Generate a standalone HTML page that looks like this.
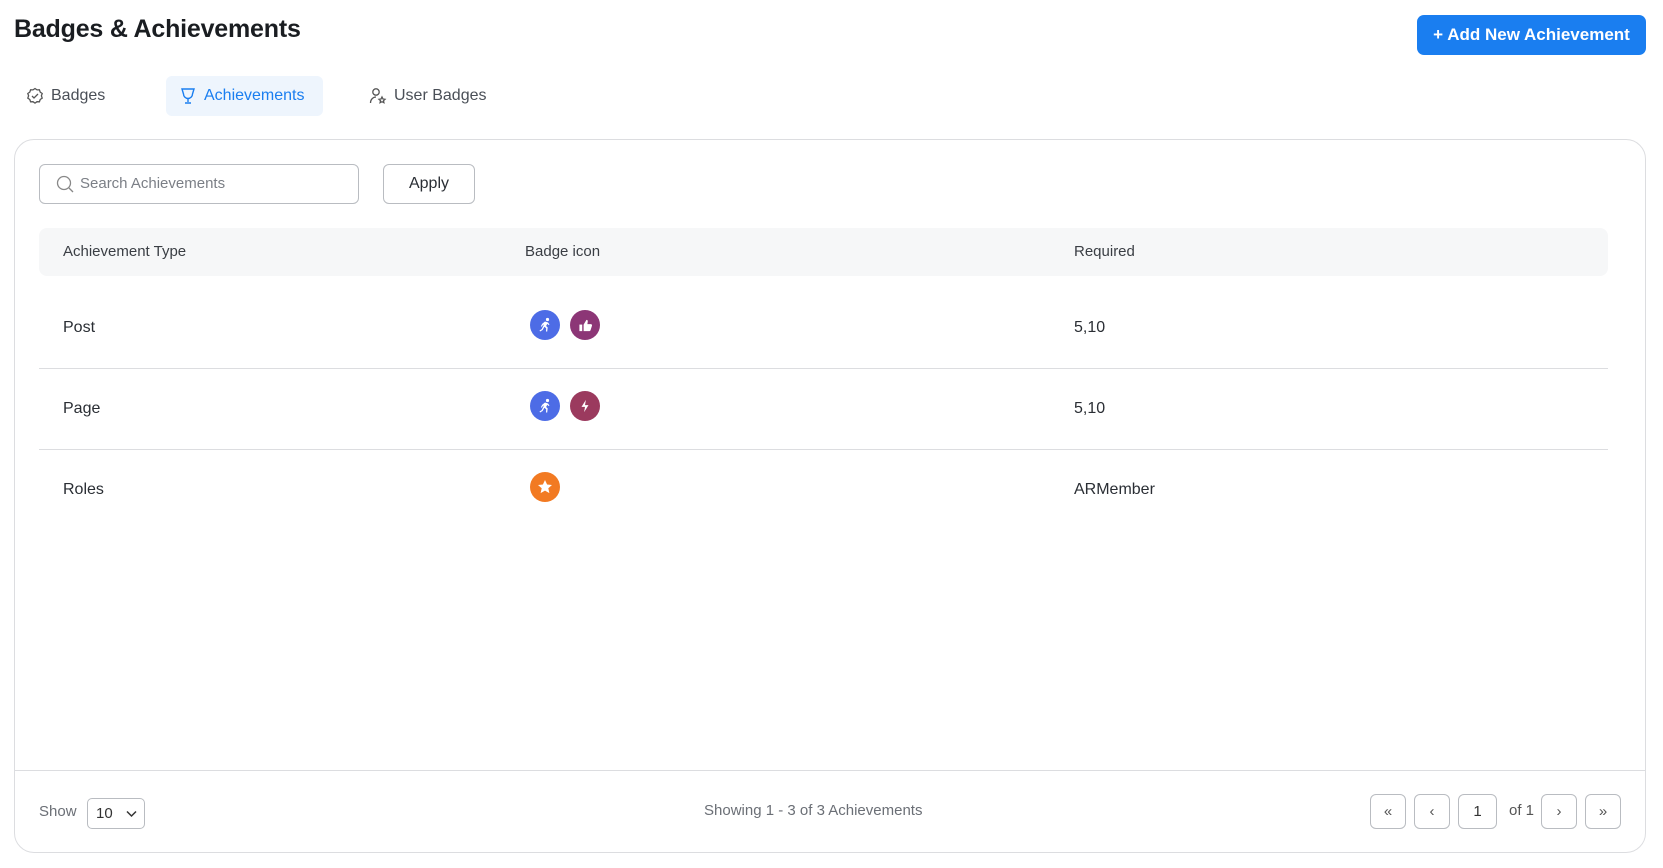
<!DOCTYPE html>
<html><head><meta charset="utf-8"><style>
*{box-sizing:border-box;margin:0;padding:0}
body{width:1663px;height:868px;background:#fff;font-family:"Liberation Sans",sans-serif;color:#1f2329;position:relative;overflow:hidden}
.abs{position:absolute}
h1{position:absolute;left:14px;top:15px;font-size:25px;font-weight:700;color:#1a1d21;letter-spacing:-0.2px}
.btn{position:absolute;left:1417px;top:15px;width:229px;height:40px;background:#1a7ef0;border-radius:7px;color:#fff;font-weight:700;font-size:17px;line-height:40px;text-align:center}
.tab{position:absolute;top:76px;height:40px;line-height:40px;font-size:16px;color:#4a4f57;display:flex;align-items:center;gap:7px}
.card{position:absolute;left:14px;top:139px;width:1632px;height:714px;border:1px solid #dcdde0;border-radius:20px}
.search{position:absolute;left:39px;top:164px;width:320px;height:40px;border:1px solid #b9bcc1;border-radius:6px;font-size:15px;color:#7b7f86;line-height:38px;padding-left:40px}
.apply{position:absolute;left:383px;top:164px;width:92px;height:40px;border:1px solid #b9bcc1;border-radius:6px;font-size:16px;line-height:38px;text-align:center;color:#2a2e34}
.thead{position:absolute;left:39px;top:228px;width:1569px;height:48px;background:#f6f7f8;border-radius:8px;font-size:15px;color:#3a3e44}
.thead span,.row span{position:absolute;top:0;line-height:48px}
.row{position:absolute;left:39px;width:1569px;height:81px;font-size:16px;color:#2a2e34}
.line{position:absolute;left:39px;width:1569px;height:1px;background:#dcdde0}
.ic{position:absolute;width:30px;height:30px;border-radius:50%;display:flex;align-items:center;justify-content:center}
.pg{position:absolute;top:794px;width:36px;height:35px;border:1px solid #b9bcc1;border-radius:6px;text-align:center;line-height:33px;font-size:15px;color:#555}
</style></head><body>
<h1>Badges &amp; Achievements</h1>
<div class="btn">+ Add New Achievement</div>

<div class="tab" style="left:26px"><svg width="18" height="18" viewBox="0 0 18 18" fill="none" stroke="#555" stroke-width="1.3"><path d="M9 1.5l2 1.4 2.4-.1.8 2.3 2 1.4-.8 2.3.8 2.3-2 1.4-.8 2.3-2.4-.1-2 1.4-2-1.4-2.4.1-.8-2.3-2-1.4.8-2.3-.8-2.3 2-1.4.8-2.3 2.4.1z"/><path d="M6 9l2 2 4-4"/></svg>Badges</div>
<div class="abs" style="left:166px;top:76px;width:157px;height:40px;background:#eef5fd;border-radius:6px"></div>
<div class="tab" style="left:179px;color:#1a7ef0"><svg width="18" height="18" viewBox="0 0 18 18" fill="none" stroke="#1a7ef0" stroke-width="1.4"><path d="M3 2h12l-1.5 5a4.5 4.5 0 0 1-9 0z"/><path d="M9 12v3M6 16h6"/></svg>Achievements</div>
<div class="tab" style="left:369px"><svg width="18" height="18" viewBox="0 0 18 18" fill="none" stroke="#555" stroke-width="1.3"><circle cx="7" cy="5" r="3.2"/><path d="M1.5 16c0-3.5 2.5-6 5.5-6"/><path d="M13 10l1 2 2 .3-1.5 1.4.4 2-1.9-1-1.9 1 .4-2-1.5-1.4 2-.3z"/></svg>User Badges</div>

<div class="card"></div>
<div class="search">Search Achievements</div>
<svg class="abs" style="left:56px;top:175px" width="18" height="18" viewBox="0 0 18 18" fill="none" stroke="#888" stroke-width="1.3"><circle cx="8" cy="8" r="6.5"/><path d="M13 13l4 4"/></svg>
<div class="apply">Apply</div>

<div class="thead"><span style="left:24px">Achievement Type</span><span style="left:486px">Badge icon</span><span style="left:1035px">Required</span></div>

<div class="row" style="top:287px"><span style="left:24px;line-height:81px">Post</span><span style="left:1035px;line-height:81px">5,10</span></div>
<div class="line" style="top:368px"></div>
<div class="row" style="top:368px"><span style="left:24px;line-height:81px">Page</span><span style="left:1035px;line-height:81px">5,10</span></div>
<div class="line" style="top:449px"></div>
<div class="row" style="top:449px"><span style="left:24px;line-height:81px">Roles</span><span style="left:1035px;line-height:81px">ARMember</span></div>

<div class="ic" style="left:530px;top:310px;background:#4d6ce6"><svg width="16" height="16" viewBox="0 0 16 16" fill="#fff"><circle cx="10.5" cy="2.5" r="1.6"/><path d="M8 4.5l3 1 1.5 2-1 .5-1.2-1.3-1.2 2.3 1.6 1.5-.5 4h-1.2l.2-3.2-1.8-1.5-1.8 3.2-2.5 1.5-.6-1 2.2-1.4 2.2-4.5-1 .3-1 1.8-1-.5 1.3-2.4z"/></svg></div>
<div class="ic" style="left:570px;top:310px;background:#8c3676"><svg width="15" height="15" viewBox="0 0 16 16" fill="#fff"><rect x="1.5" y="7" width="3" height="7"/><path d="M6 7l3-5c1.2 0 1.6.8 1.4 2L10 6.5h3.6c1 0 1.6.8 1.3 1.8l-1.5 4.6c-.3.7-.8 1.1-1.5 1.1H6z"/></svg></div>
<div class="ic" style="left:530px;top:391px;background:#4d6ce6"><svg width="16" height="16" viewBox="0 0 16 16" fill="#fff"><circle cx="10.5" cy="2.5" r="1.6"/><path d="M8 4.5l3 1 1.5 2-1 .5-1.2-1.3-1.2 2.3 1.6 1.5-.5 4h-1.2l.2-3.2-1.8-1.5-1.8 3.2-2.5 1.5-.6-1 2.2-1.4 2.2-4.5-1 .3-1 1.8-1-.5 1.3-2.4z"/></svg></div>
<div class="ic" style="left:570px;top:391px;background:#9b3a5e"><svg width="12" height="14" viewBox="0 0 12 16" fill="#fff"><path d="M7 1L2 9h4l-1 6 5-8H6z"/></svg></div>
<div class="ic" style="left:530px;top:472px;background:#f27a22"><svg width="16" height="16" viewBox="0 0 16 16" fill="#fff"><path d="M8 1l2.1 4.5 4.9.5-3.7 3.3 1.1 4.8L8 11.6 3.6 14.1l1.1-4.8L1 6l4.9-.5z"/></svg></div>

<div class="line" style="top:770px;left:15px;width:1630px"></div>
<div class="abs" style="left:39px;top:803px;font-size:15px;color:#6b6f76">Show</div>
<div class="abs" style="left:87px;top:798px;width:58px;height:31px;border:1px solid #b9bcc1;border-radius:5px;font-size:15px;line-height:29px;padding-left:8px;color:#333">10<svg class="abs" style="left:38px;top:11px" width="11" height="8" viewBox="0 0 11 8" fill="none" stroke="#333" stroke-width="1.5"><path d="M1 1.5l4.5 4.5 4.5-4.5"/></svg></div>
<div class="abs" style="left:704px;top:802px;font-size:15px;color:#6b6f76">Showing 1 - 3 of 3 Achievements</div>
<div class="pg" style="left:1370px">«</div>
<div class="pg" style="left:1414px">‹</div>
<div class="pg" style="left:1458px;width:39px;color:#333">1</div>
<div class="abs" style="left:1509px;top:802px;font-size:15px;color:#555">of 1</div>
<div class="pg" style="left:1541px">›</div>
<div class="pg" style="left:1585px">»</div>
</body></html>
